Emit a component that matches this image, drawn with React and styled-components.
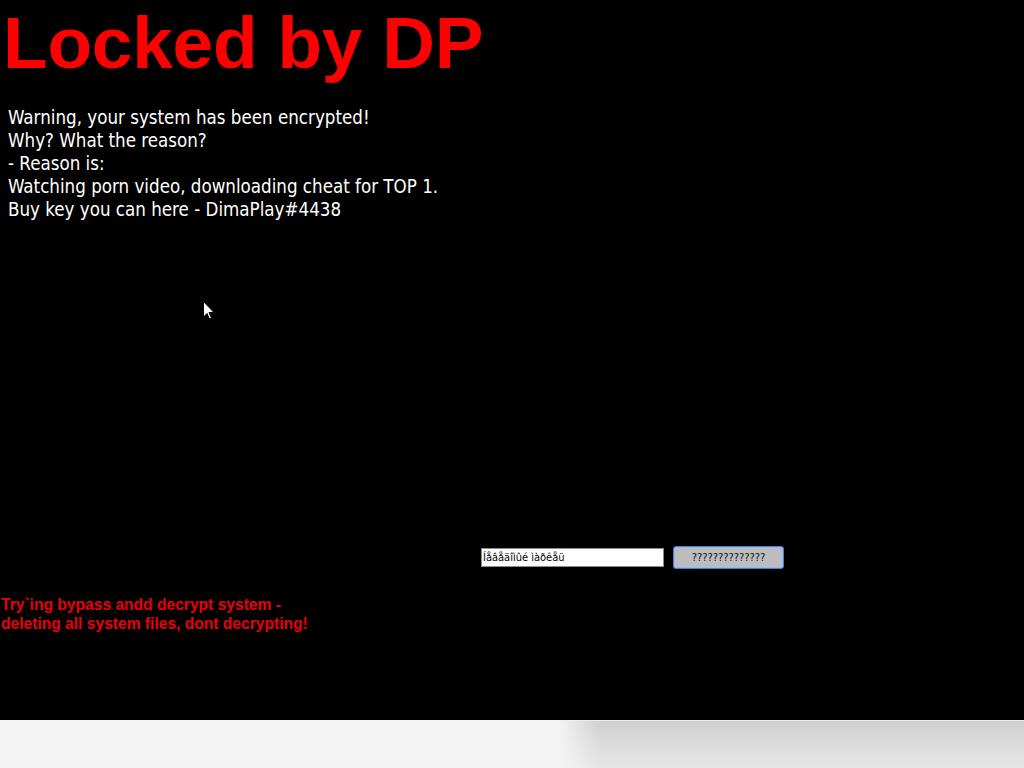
import React from 'react';
import styled, { createGlobalStyle } from 'styled-components';

const GlobalStyle = createGlobalStyle`
  html, body {
    margin: 0;
    padding: 0;
    background: #f2f2f2;
    overflow: hidden;
  }
`;

const Page = styled.div`
  width: 1024px;
  height: 768px;
  display: flex;
  flex-direction: column;
`;

const Screen = styled.div`
  position: relative;
  height: 720px;
  background: #000;
  display: flex;
  flex-direction: column;
`;

const Title = styled.h1`
  margin: 0;
  padding-left: 3px;
  font-family: "Liberation Sans", Arial, sans-serif;
  font-weight: 700;
  font-size: 73px;
  line-height: 86px;
  color: #ff0000;
  letter-spacing: -0.2px;
`;

const Message = styled.div`
  margin-top: 20px;
  padding-left: 8px;
  font-family: "DejaVu Sans Condensed", "DejaVu Sans", sans-serif;
  font-size: 18.6px;
  line-height: 23px;
  color: #fff;
`;

const Line = styled.div``;

const Controls = styled.div`
  margin-top: 325px;
  padding-left: 481px;
  display: flex;
  align-items: center;
  gap: 9px;
  height: 22px;
`;

const KeyInput = styled.input`
  box-sizing: border-box;
  width: 183px;
  height: 19px;
  margin: 0;
  padding: 0 1px;
  border: 1px solid #8a8a8a;
  background: #fff;
  color: #000;
  font-family: "DejaVu Sans Condensed", "DejaVu Sans", sans-serif;
  font-size: 11px;
  outline: none;
`;

const UnlockButton = styled.button`
  box-sizing: border-box;
  width: 111px;
  height: 23px;
  margin: 0;
  padding: 0;
  border: 1px solid #4a7fd6;
  border-radius: 3px;
  background: #bdbdbd;
  color: #111;
  font-family: "DejaVu Sans Condensed", "DejaVu Sans", sans-serif;
  font-size: 11px;
  box-shadow: inset 0 0 0 1px #9ab8e8;
`;

const Warning = styled.div`
  margin-top: 27px;
  padding-left: 1px;
  font-family: "Liberation Sans", Arial, sans-serif;
  font-weight: 700;
  font-size: 15.6px;
  line-height: 19px;
  color: #e8000b;
`;

const Cursor = styled.svg`
  position: absolute;
  left: 203px;
  top: 301px;
`;

const Taskbar = styled.div`
  flex: 1;
  display: flex;
  background: #f3f3f3;
`;

const Gap = styled.div`
  width: 560px;
`;

const Shade = styled.div`
  flex: 1;
  border-top: 1px solid #ededed;
  background:
    linear-gradient(to right, #f3f3f3 0px, rgba(243,243,243,0) 40px),
    linear-gradient(to bottom, #cfcfcf 0%, #dcdcdc 50%, #e6e6e6 100%);
`;

const lines = [
  'Warning, your system has been encrypted!',
  'Why? What the reason?',
  '- Reason is:',
  'Watching porn video, downloading cheat for TOP 1.',
  'Buy key you can here - DimaPlay#4438',
];

export default function App() {
  return (
    <Page>
      <GlobalStyle />
      <Screen>
        <Title>Locked by DP</Title>
        <Message>
          {lines.map((l) => <Line key={l}>{l}</Line>)}
        </Message>
        <Controls>
          <KeyInput defaultValue="Íåâåäîìûé ìàðêåü" />
          <UnlockButton>??????????????</UnlockButton>
        </Controls>
        <Warning>
          Try`ing bypass andd decrypt system -<br />
          deleting all system files, dont decrypting!
        </Warning>
        <Cursor width="12" height="19" viewBox="0 0 12 19">
          <path d="M0.5 0.5 L0.5 16 L4 12.5 L6.5 18 L8.5 17 L6 11.5 L11 11.5 Z" fill="#fff" stroke="#000" strokeWidth="1" />
        </Cursor>
      </Screen>
      <Taskbar>
        <Gap />
        <Shade />
      </Taskbar>
    </Page>
  );
}
